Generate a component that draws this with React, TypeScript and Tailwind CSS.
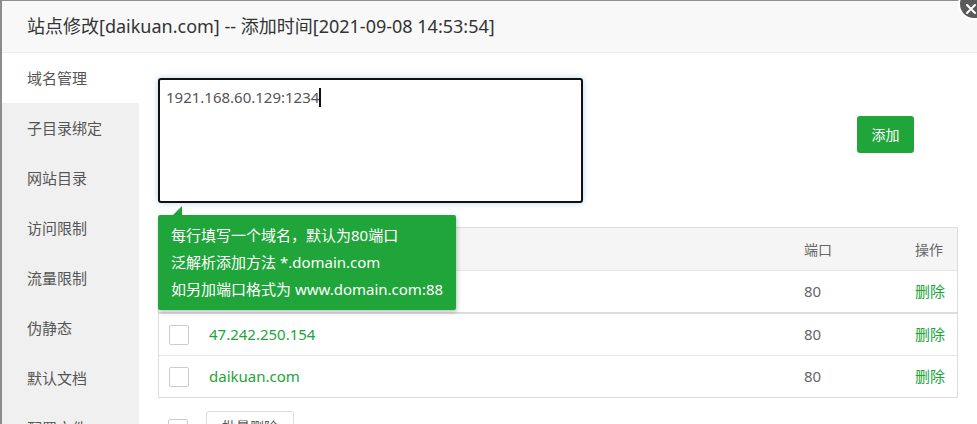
import React from "react";

const font = { fontFamily: '"Noto Sans", "Noto Sans CJK SC", sans-serif' };

const navItems = ["域名管理", "子目录绑定", "网站目录", "访问限制", "流量限制", "伪静态", "默认文档", "配置文件"];

function Checkbox() {
  return <span className="block w-[20px] h-[20px] border border-[#cccccc] rounded-[2px] bg-white" />;
}

export default function App() {
  const rows = ["", "47.242.250.154", "daikuan.com"];
  return (
    <div className="w-[977px] h-[424px] bg-[#8c8c8c] overflow-hidden relative" style={font}>
      <div className="ml-[2px] mt-[1px] h-[423px] bg-white flex flex-col relative">
        <div className="h-[52px] shrink-0 bg-[#f8f8f8] border-b border-[#eeeeee] flex items-center pl-[25px] text-[18px] text-[#333333]">
          站点修改[daikuan.com] -- 添加时间[2021-09-08 14:53:54]
        </div>
        <div className="flex flex-1 min-h-0">
          <div className="w-[137px] shrink-0 bg-[#f0f0f0] flex flex-col">
            {navItems.map((n, i) => (
              <div
                key={n}
                className={`h-[50px] shrink-0 flex items-center pl-[25px] text-[15px] text-[#555555] ${i === 0 ? "bg-white" : ""}`}
              >
                {n}
              </div>
            ))}
          </div>
          <div className="flex-1 pl-[19px] pt-[25px] relative">
            <div className="flex items-start">
              <div className="w-[425px] h-[125px] border-2 border-[#111111] rounded-[3px] shadow-[0_0_6px_rgba(102,175,233,0.5)] px-[6px] pt-[5px] text-[15px] text-[#555555] leading-[24px]">
                1921.168.60.129:1234<span className="inline-block w-[2px] h-[19px] bg-[#111111] align-[-4px]" />
              </div>
              <button className="ml-[274px] mt-[38px] w-[57px] h-[37px] bg-[#20a53a] text-white text-[14px] rounded-[3px]">
                添加
              </button>
            </div>
            <div className="mt-[24px] w-[800px] border border-[#dddddd] text-[14px]">
              <div className="h-[42px] bg-[#f5f5f5] flex items-center text-[#666666]">
                <div className="flex-1" />
                <div className="w-[111px]">端口</div>
                <div className="w-[42px]">操作</div>
              </div>
              {rows.map((r, i) => (
                <div
                  key={i}
                  className={`h-[42px] flex items-center border-t ${i === 1 ? "border-t-2 h-[43px] border-[#dddddd]" : "border-[#e5e5e5]"}`}
                >
                  <div className="w-[50px] pl-[10px]">
                    <Checkbox />
                  </div>
                  <div className="flex-1 text-[15px] text-[#20a53a]">{r}</div>
                  <div className="w-[111px] text-[15px] text-[#666666]">80</div>
                  <div className="w-[42px] text-[15px] text-[#20a53a]">删除</div>
                </div>
              ))}
            </div>
            <div className="mt-[13px] flex items-start">
              <div className="ml-[10px] mt-[8px]">
                <Checkbox />
              </div>
              <button className="ml-[18px] h-[30px] px-[15px] border border-[#dddddd] rounded-[3px] bg-white text-[14px] text-[#555555]">
                批量删除
              </button>
            </div>
            <div className="absolute left-[19px] top-[153px]">
              <div className="ml-[15px] w-0 h-0 border-l-[9px] border-l-transparent border-b-[9px] border-b-[#20a53a]" />
              <div className="w-[298px] h-[95px] bg-[#20a53a] rounded-[2px] text-white text-[15px] pl-[13px] pt-[7px] leading-[27px] whitespace-nowrap shadow-[1px_2px_4px_rgba(0,0,0,0.25)]">
                <div>每行填写一个域名，默认为80端口</div>
                <div>泛解析添加方法 *.domain.com</div>
                <div>如另加端口格式为 www.domain.com:88</div>
              </div>
            </div>
          </div>
        </div>
      </div>
      <div className="absolute left-[958px] top-[-12px] w-[32px] h-[32px] rounded-full bg-[#5a5a5a] border-2 border-white flex items-center justify-center">
        <svg width="12" height="12" viewBox="0 0 12 12" className="-ml-[6px] mt-[10px]">
          <path d="M2 2 L10 10 M10 2 L2 10" stroke="white" strokeWidth="2" strokeLinecap="round" />
        </svg>
      </div>
    </div>
  );
}
